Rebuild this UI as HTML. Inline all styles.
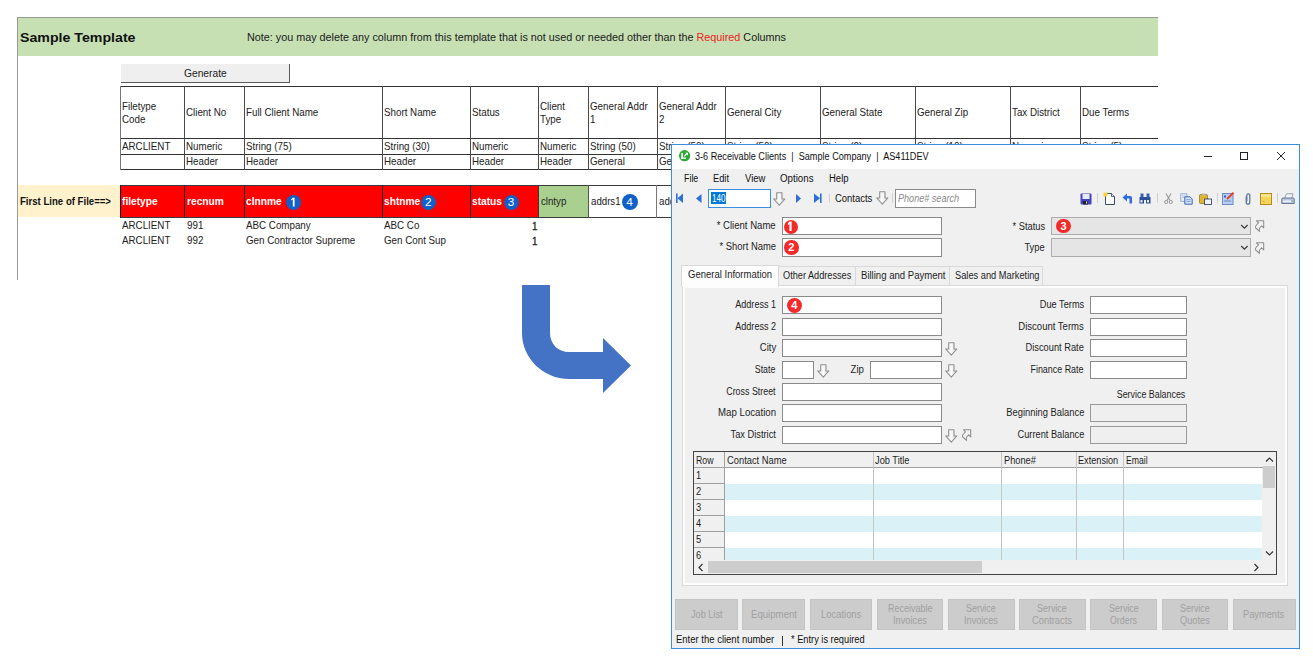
<!DOCTYPE html>
<html><head><meta charset="utf-8">
<style>
*{box-sizing:border-box;margin:0;padding:0}
html,body{width:1313px;height:664px;overflow:hidden;background:#fff}
body{position:relative;font-family:"Liberation Sans",sans-serif;color:#000}
.a{position:absolute}
.t{position:absolute;white-space:nowrap;line-height:1}
.wt{}
.xl{font-size:10.3px;color:#222;transform:scaleX(0.95);transform-origin:0 0}
.hl{position:absolute;height:1px;background:#333}
.vl{position:absolute;width:1px;background:#4a4a4a}
.badge{position:absolute;border-radius:50%;background:#1060c8;color:#fff;font-size:11px;text-align:center}
.rb{position:absolute;width:14px;height:14px;border-radius:50%;background:#f42a2a;color:#fff;font-size:11px;font-weight:bold;text-align:center;line-height:14px}
.inp{position:absolute;background:#fff;border:1px solid #8a8a8a}
.dis{position:absolute;background:#efefef;border:1px solid #9a9a9a}
</style></head><body>
<div class="a" style="left:17px;top:17px;width:1px;height:263px;background:#9a9a9a"></div>
<div class="a" style="left:17px;top:17px;width:1141px;height:1px;background:#9a9a9a"></div>
<div class="a" style="left:18px;top:18px;width:1140px;height:38px;background:#c6e0b4"></div>
<div class="t" style="top:30.85px;font-size:13.2px;color:#111;transform:scaleX(1.0745);font-weight:bold;left:20.30px;transform-origin:0 0;">Sample Template</div>
<div class="t" style="left:247px;top:32px;font-size:10.8px;color:#1a1a1a">Note: you may delete any column from this template that is not used or needed other than the <span style="color:#ee2020">Required</span> Columns</div>
<div class="a" style="left:121px;top:64px;width:169px;height:19px;background:#efefef;border-right:1px solid #5a5a5a;border-bottom:1px solid #5a5a5a"></div>
<div class="t" style="top:68.55px;font-size:10px;color:#222;transform:scaleX(1.0240);left:183.50px;transform-origin:0 0;">Generate</div>
<div class="hl" style="left:120px;top:86px;width:1038px"></div>
<div class="hl" style="left:120px;top:138px;width:1038px"></div>
<div class="hl" style="left:120px;top:154px;width:1038px"></div>
<div class="hl" style="left:120px;top:169px;width:1038px"></div>
<div class="vl" style="left:120px;top:86px;height:84px;background:#777"></div>
<div class="vl" style="left:184px;top:86px;height:84px"></div>
<div class="vl" style="left:244px;top:86px;height:84px"></div>
<div class="vl" style="left:382px;top:86px;height:84px"></div>
<div class="vl" style="left:470px;top:86px;height:84px"></div>
<div class="vl" style="left:538px;top:86px;height:84px"></div>
<div class="vl" style="left:588px;top:86px;height:84px"></div>
<div class="vl" style="left:657px;top:86px;height:84px"></div>
<div class="vl" style="left:725px;top:86px;height:84px"></div>
<div class="vl" style="left:820px;top:86px;height:84px"></div>
<div class="vl" style="left:915px;top:86px;height:84px"></div>
<div class="vl" style="left:1010px;top:86px;height:84px"></div>
<div class="vl" style="left:1080px;top:86px;height:84px"></div>
<div class="t xl" style="left:122px;top:101.3px;line-height:12.6px">Filetype<br>Code</div>
<div class="t xl" style="left:122px;top:142px">ARCLIENT</div>
<div class="t xl" style="left:186px;top:108px">Client No</div>
<div class="t xl" style="left:186px;top:142px">Numeric</div>
<div class="t xl" style="left:186px;top:157px">Header</div>
<div class="t xl" style="left:246px;top:108px">Full Client Name</div>
<div class="t xl" style="left:246px;top:142px">String (75)</div>
<div class="t xl" style="left:246px;top:157px">Header</div>
<div class="t xl" style="left:384px;top:108px">Short Name</div>
<div class="t xl" style="left:384px;top:142px">String (30)</div>
<div class="t xl" style="left:384px;top:157px">Header</div>
<div class="t xl" style="left:472px;top:108px">Status</div>
<div class="t xl" style="left:472px;top:142px">Numeric</div>
<div class="t xl" style="left:472px;top:157px">Header</div>
<div class="t xl" style="left:540px;top:101.3px;line-height:12.6px">Client<br>Type</div>
<div class="t xl" style="left:540px;top:142px">Numeric</div>
<div class="t xl" style="left:540px;top:157px">Header</div>
<div class="t xl" style="left:590px;top:101.3px;line-height:12.6px">General Addr<br>1</div>
<div class="t xl" style="left:590px;top:142px">String (50)</div>
<div class="t xl" style="left:590px;top:157px">General</div>
<div class="t xl" style="left:659px;top:101.3px;line-height:12.6px">General Addr<br>2</div>
<div class="t xl" style="left:659px;top:142px">String (50)</div>
<div class="t xl" style="left:659px;top:157px">General</div>
<div class="t xl" style="left:727px;top:108px">General City</div>
<div class="t xl" style="left:727px;top:142px">String (50)</div>
<div class="t xl" style="left:727px;top:157px">General</div>
<div class="t xl" style="left:822px;top:108px">General State</div>
<div class="t xl" style="left:822px;top:142px">String (2)</div>
<div class="t xl" style="left:822px;top:157px">General</div>
<div class="t xl" style="left:917px;top:108px">General Zip</div>
<div class="t xl" style="left:917px;top:142px">String (10)</div>
<div class="t xl" style="left:917px;top:157px">General</div>
<div class="t xl" style="left:1012px;top:108px">Tax District</div>
<div class="t xl" style="left:1012px;top:142px">Numeric</div>
<div class="t xl" style="left:1012px;top:157px">General</div>
<div class="t xl" style="left:1082px;top:108px">Due Terms</div>
<div class="t xl" style="left:1082px;top:142px">String (5)</div>
<div class="t xl" style="left:1082px;top:157px">General</div>
<div class="a" style="left:18px;top:185px;width:102px;height:32px;background:#fff2cc"></div>
<div class="t" style="top:197.30px;font-size:10.3px;color:#111;transform:scaleX(0.9324);font-weight:bold;left:19.90px;transform-origin:0 0;">First Line of File==&gt;</div>
<div class="a" style="left:120px;top:185px;width:419px;height:33px;background:#ff0000"></div>
<div class="a" style="left:539px;top:185px;width:49px;height:33px;background:#a9d08e"></div>
<div class="hl" style="left:120px;top:185px;width:551px;background:#3a3a3a"></div>
<div class="hl" style="left:120px;top:217px;width:551px;background:#3a3a3a"></div>
<div class="vl" style="left:120px;top:185px;height:33px;background:#1a1a1a"></div>
<div class="vl" style="left:184px;top:185px;height:33px;background:#1a1a1a"></div>
<div class="vl" style="left:244px;top:185px;height:33px;background:#1a1a1a"></div>
<div class="vl" style="left:382px;top:185px;height:33px;background:#1a1a1a"></div>
<div class="vl" style="left:470px;top:185px;height:33px;background:#1a1a1a"></div>
<div class="vl" style="left:538px;top:185px;height:33px;background:#3a3a3a"></div>
<div class="vl" style="left:588px;top:185px;height:33px;background:#555"></div>
<div class="vl" style="left:656px;top:185px;height:33px;background:#777"></div>
<div class="t" style="left:122px;top:197px;font-size:10.2px;font-weight:bold;color:#fff">filetype</div>
<div class="t" style="left:187px;top:197px;font-size:10.2px;font-weight:bold;color:#fff">recnum</div>
<div class="t" style="left:246px;top:197px;font-size:10.2px;font-weight:bold;color:#fff">clnnme</div>
<div class="t" style="left:384px;top:197px;font-size:10.2px;font-weight:bold;color:#fff">shtnme</div>
<div class="t" style="left:472px;top:197px;font-size:10.2px;font-weight:bold;color:#fff">status</div>
<div class="t xl" style="left:541px;top:197px;font-size:10.2px;color:#222">clntyp</div>
<div class="t xl" style="left:591px;top:197px;font-size:10.2px;color:#222">addrs1</div>
<div class="t xl" style="left:659px;top:197px;font-size:10.2px;color:#222">addrs2</div>
<svg class="a" style="left:285.5px;top:195.3px" width="15" height="15" viewBox="0 0 15 15"><circle cx="7.5" cy="7.5" r="7.5" fill="#1060c8"/><path d="M6.8 2.7 H8.6 V11.6 H6.8 V4.5 L5.2 5.5 V4.3 Z" fill="#fff"/></svg>
<div class="badge" style="left:420.8px;top:194.8px;width:15px;height:15px;line-height:15px;font-size:11.8px">2</div>
<div class="badge" style="left:503.5px;top:194.8px;width:15px;height:15px;line-height:15px;font-size:11.8px">3</div>
<div class="badge" style="left:621.6px;top:193.6px;width:16px;height:16px;line-height:16px;font-size:11.8px">4</div>
<div class="t xl" style="left:122px;top:221px">ARCLIENT</div>
<div class="t xl" style="left:187px;top:221px">991</div>
<div class="t xl" style="left:246px;top:221px">ABC Company</div>
<div class="t xl" style="left:384px;top:221px">ABC Co</div>
<div class="t xl" style="left:531.5px;top:221.5px;-webkit-text-stroke:0.3px #222">1</div>
<div class="t xl" style="left:122px;top:236px">ARCLIENT</div>
<div class="t xl" style="left:187px;top:236px">992</div>
<div class="t xl" style="left:246px;top:236px">Gen Contractor Supreme</div>
<div class="t xl" style="left:384px;top:236px">Gen Cont Sup</div>
<div class="t xl" style="left:531.5px;top:236.5px;-webkit-text-stroke:0.3px #222">1</div>
<svg class="a" style="left:0;top:0" width="1313" height="664"><path d="M522 285 L550 285 L550 333 C550 344 558 352 569 352 L603 352 L603 338 L631 365.5 L603 393 L603 379 L569 379 C543 379 522 358 522 333 Z" fill="#4472c4"/></svg>
<div class="a" style="left:671px;top:144px;width:629px;height:505px;border:1px solid #3b8ee0;background:#f0f0f0"></div>
<div class="a" style="left:672px;top:145px;width:627px;height:24px;background:#fff"></div>
<svg class="a" style="left:678px;top:149px" width="13" height="13" viewBox="0 0 13 13"><circle cx="6.6" cy="6.7" r="5.6" fill="#2ea836"/><rect x="3.3" y="3.9" width="1.7" height="5.9" fill="#fff"/><rect x="3.3" y="8.5" width="4.7" height="1.3" fill="#fff"/><path d="M6.2 7.3 L9.1 4.4" stroke="#fff" stroke-width="1.2"/><path d="M7.2 3.7 H10 V6.5 Z" fill="#fff"/></svg>
<div class="t wt" style="top:151.56px;font-size:10px;color:#111;transform:scaleX(0.9116);left:695.00px;transform-origin:0 0;">3-6 Receivable Clients&nbsp; |&nbsp; Sample Company&nbsp; |&nbsp; AS411DEV</div>
<div class="a" style="left:1204px;top:156px;width:8px;height:1px;background:#222"></div>
<div class="a" style="left:1240px;top:152px;width:8px;height:8px;border:1px solid #222"></div>
<svg class="a" style="left:1276px;top:151px" width="10" height="10"><path d="M1 1 L9 9 M9 1 L1 9" stroke="#222" stroke-width="1"/></svg>
<div class="t wt" style="top:173.56px;font-size:10px;color:#111;transform:scaleX(0.8882);left:683.70px;transform-origin:0 0;">File</div>
<div class="t wt" style="top:173.56px;font-size:10px;color:#111;transform:scaleX(0.9275);left:713.20px;transform-origin:0 0;">Edit</div>
<div class="t wt" style="top:173.56px;font-size:10px;color:#111;transform:scaleX(0.9442);left:744.50px;transform-origin:0 0;">View</div>
<div class="t wt" style="top:173.56px;font-size:10px;color:#111;transform:scaleX(0.9724);left:779.70px;transform-origin:0 0;">Options</div>
<div class="t wt" style="top:173.56px;font-size:10px;color:#111;transform:scaleX(0.9489);left:828.70px;transform-origin:0 0;">Help</div>
<svg class="a" style="left:672px;top:190px" width="160" height="18"><rect x="4" y="3.5" width="1.6" height="9.5" fill="#2a6fdc"/><path d="M11 3.5 L5.5 8.2 L11 13 Z" fill="#2a6fdc"/><path d="M29.5 4 L24 8.5 L29.5 13 Z" fill="#2a6fdc"/><path d="M124 4 L129 8.5 L124 13 Z" fill="#2a6fdc"/><path d="M142 3.5 L148 8.2 L142 13 Z" fill="#2a6fdc"/><rect x="148" y="3.5" width="1.6" height="9.5" fill="#2a6fdc"/><rect x="157" y="3.5" width="1" height="9.5" fill="#d0d0d0"/></svg>
<div class="a" style="left:708px;top:189px;width:63px;height:19px;background:#fff;border:1px solid #3c8fe0"></div>
<div class="a" style="left:711px;top:192px;width:14.5px;height:12px;background:#0078d7"></div>
<div class="t wt" style="top:193.56px;font-size:10px;color:#fff;transform:scaleX(0.8084);left:711.50px;transform-origin:0 0;">140</div>
<svg class="a" style="left:773px;top:191.9px" width="13" height="14" viewBox="0 0 13 14"><defs><linearGradient id="dg1" x1="0" y1="0" x2="1" y2="0"><stop offset="0" stop-color="#e6e6e6"/><stop offset="0.5" stop-color="#fbfbfb"/><stop offset="1" stop-color="#d6d6d6"/></linearGradient></defs><path d="M3.7 0.7 H9 V7 H11.9 L6.3 13.1 L0.7 7 H3.7 Z" fill="url(#dg1)" stroke="#8e8e8e" stroke-width="1.05" stroke-linejoin="round"/></svg>
<div class="t wt" style="top:193.56px;font-size:10px;color:#111;transform:scaleX(0.9430);left:835.20px;transform-origin:0 0;">Contacts</div>
<svg class="a" style="left:875.6px;top:191.4px" width="13" height="14" viewBox="0 0 13 14"><defs><linearGradient id="dg2" x1="0" y1="0" x2="1" y2="0"><stop offset="0" stop-color="#e6e6e6"/><stop offset="0.5" stop-color="#fbfbfb"/><stop offset="1" stop-color="#d6d6d6"/></linearGradient></defs><path d="M3.7 0.7 H9 V7 H11.9 L6.3 13.1 L0.7 7 H3.7 Z" fill="url(#dg2)" stroke="#8e8e8e" stroke-width="1.05" stroke-linejoin="round"/></svg>
<div class="a" style="left:892px;top:193px;width:1px;height:10px;background:#d0d0d0"></div>
<div class="a" style="left:895px;top:189px;width:81px;height:19px;background:#fff;border:1px solid #8a8a8a"></div>
<div class="t" style="top:193.56px;font-size:10px;color:#8a8a8a;transform:scaleX(0.9071);font-style:italic;left:898.00px;transform-origin:0 0;">Phone# search</div>
<svg class="a" style="left:1080px;top:193px" width="12" height="12" viewBox="0 0 12 12"><rect x="0.5" y="0.5" width="11" height="11" rx="1" fill="#4343c0"/><rect x="2.5" y="1" width="7" height="5" fill="#e8ecff"/><rect x="3" y="8" width="5" height="3.5" fill="#222"/><rect x="6" y="8.5" width="1.2" height="2" fill="#ddd"/></svg>
<div class="a" style="left:1097px;top:193px;width:1px;height:10px;background:#d0d0d0"></div>
<svg class="a" style="left:1103px;top:192px" width="13" height="13" viewBox="0 0 13 13"><path d="M2.5 1.5 H8.5 L11.5 4.5 V12.5 H2.5 Z" fill="#fdfdfd" stroke="#3c4a66" stroke-width="1"/><path d="M8.5 1.5 V4.5 H11.5" fill="#dde" stroke="#3c4a66" stroke-width="0.8"/><rect x="0.5" y="0.5" width="4" height="4" fill="#f6d23c"/></svg>
<svg class="a" style="left:1122px;top:193px" width="11" height="11" viewBox="0 0 11 11"><path d="M0.5 4.5 L5 0.5 V3 H8.5 Q10 3 10 4.5 V10.5 H7.5 V5.5 H5 V8.5 Z" fill="#2f6ee0"/></svg>
<svg class="a" style="left:1139px;top:193px" width="12" height="11" viewBox="0 0 12 11"><rect x="0.5" y="4" width="4.5" height="6.5" fill="#2b4f9a"/><rect x="7" y="4" width="4.5" height="6.5" fill="#2b4f9a"/><rect x="1.5" y="0.5" width="3" height="4" fill="#3b62b0"/><rect x="7.5" y="0.5" width="3" height="4" fill="#3b62b0"/><rect x="4.5" y="4" width="3" height="3" fill="#2b4f9a"/><rect x="1.5" y="7" width="2" height="2.5" fill="#e8eefc"/><rect x="8" y="7" width="2" height="2.5" fill="#e8eefc"/></svg>
<div class="a" style="left:1157px;top:193px;width:1px;height:10px;background:#d0d0d0"></div>
<svg class="a" style="left:1164px;top:193px" width="9" height="11" viewBox="0 0 9 11"><path d="M2 0.5 L6 7.5 M7 0.5 L3 7.5" stroke="#9a9a9a" stroke-width="1.1"/><circle cx="2.2" cy="9" r="1.6" fill="none" stroke="#9a9a9a" stroke-width="1"/><circle cx="6.8" cy="9" r="1.6" fill="none" stroke="#9a9a9a" stroke-width="1"/></svg>
<svg class="a" style="left:1180px;top:192.5px" width="13" height="12" viewBox="0 0 13 12"><rect x="0.8" y="0.8" width="6" height="7.5" fill="#eef2f8" stroke="#8da3c8" stroke-width="0.9"/><path d="M2 3 H5.5 M2 4.6 H5.5" stroke="#9fb3d6" stroke-width="0.7"/><path d="M4.8 3.8 H10 L12.2 6 V11.2 H4.8 Z" fill="#d4e2f6" stroke="#3e66b4" stroke-width="1"/><path d="M6.3 6.6 H10.6 M6.3 8.4 H10.6" stroke="#6f90cc" stroke-width="0.8"/></svg>
<svg class="a" style="left:1199px;top:193px" width="13" height="12" viewBox="0 0 13 12"><rect x="0.5" y="1.5" width="8" height="9" rx="1" fill="#e2b531" stroke="#9a7a1c" stroke-width="0.8"/><rect x="3" y="0.5" width="3.5" height="2" fill="#b8b8b8"/><rect x="5.5" y="6" width="7" height="5.5" fill="#eef2fa" stroke="#3a4a6a" stroke-width="0.9"/></svg>
<div class="a" style="left:1217px;top:193px;width:1px;height:10px;background:#d0d0d0"></div>
<svg class="a" style="left:1222px;top:192px" width="13" height="13" viewBox="0 0 13 13"><rect x="0.5" y="1.5" width="10.5" height="11" fill="#b8cdf0" stroke="#6a8cc8" stroke-width="1"/><rect x="2" y="3.5" width="2" height="2" fill="#3b5bd0"/><path d="M2 9 H9" stroke="#6a8cc8" stroke-width="1"/><path d="M5 7 L11.5 0.8" stroke="#e8412c" stroke-width="2"/></svg>
<svg class="a" style="left:1243.5px;top:192.5px" width="8" height="12" viewBox="0 0 8 12"><path d="M2.2 3.5 V9 Q2.2 11.2 4 11.2 Q5.8 11.2 5.8 9 V2.6 Q5.8 0.8 4.2 0.8 Q2.8 0.8 2.8 2.6 V8.3" fill="none" stroke="#61789c" stroke-width="1.3"/></svg>
<svg class="a" style="left:1260px;top:193px" width="12" height="12" viewBox="0 0 12 12"><rect x="0.5" y="0.5" width="11" height="11" fill="#f2d55a" stroke="#b88a18" stroke-width="1"/><rect x="1" y="1" width="10" height="3" fill="#f8e68a"/><path d="M3 8 L4.5 9" stroke="#b88a18" stroke-width="0.8"/></svg>
<div class="a" style="left:1277px;top:193px;width:1px;height:10px;background:#d0d0d0"></div>
<svg class="a" style="left:1281px;top:192.5px" width="14" height="12" viewBox="0 0 14 12"><path d="M3.5 5.5 L5.5 0.8 H12 L10.5 5.5 Z" fill="#f4f6fa" stroke="#7a8aa8" stroke-width="0.8"/><path d="M0.8 6 Q0.8 5 2 5 H12 Q13.2 5 13.2 6 V10.5 H0.8 Z" fill="#b9c6dc" stroke="#5b6d90" stroke-width="0.9"/><rect x="2" y="7.5" width="8" height="1.6" fill="#eef2f8"/><rect x="10.8" y="7.6" width="1.2" height="1" fill="#58a858"/></svg>
<div class="t wt" style="top:220.56px;font-size:10px;color:#1e1e1e;transform:scaleX(0.9562);right:537.21px;transform-origin:100% 0;">* Client Name</div>
<div class="t wt" style="top:241.56px;font-size:10px;color:#1e1e1e;transform:scaleX(0.9425);right:537.22px;transform-origin:100% 0;">* Short Name</div>
<div class="inp" style="left:782px;top:217px;width:160px;height:18px"></div>
<div class="inp" style="left:782px;top:238px;width:160px;height:19px"></div>
<svg class="a" style="left:784.4px;top:219.9px" width="14" height="14" viewBox="0 0 14 14"><circle cx="7" cy="7" r="7" fill="#f42a2a"/><path d="M5.4 1.6 H7.6 V11.1 H5.4 V4.3 L3.9 5.1 V3.3 Z" fill="#fff"/></svg>
<div class="rb" style="left:784.15px;top:240.25px;width:14.5px;height:14.5px;line-height:14.5px">2</div>
<div class="t wt" style="top:221.56px;font-size:10px;color:#1e1e1e;transform:scaleX(0.9286);right:267.98px;transform-origin:100% 0;">* Status</div>
<div class="t wt" style="top:242.56px;font-size:10px;color:#1e1e1e;transform:scaleX(0.9355);right:268.02px;transform-origin:100% 0;">Type</div>
<div class="a" style="left:1051px;top:217px;width:200px;height:18px;background:#e5e5e5;border:1px solid #adadad"></div>
<svg class="a" style="left:1239.5px;top:223.5px" width="9" height="6"><path d="M1.2 1 L4.4 4.2 L7.6 1" fill="none" stroke="#3a3a3a" stroke-width="1.25"/></svg>
<div class="a" style="left:1051px;top:238px;width:200px;height:19px;background:#e5e5e5;border:1px solid #adadad"></div>
<svg class="a" style="left:1239.5px;top:244.5px" width="9" height="6"><path d="M1.2 1 L4.4 4.2 L7.6 1" fill="none" stroke="#3a3a3a" stroke-width="1.25"/></svg>
<div class="rb" style="left:1056.25px;top:218.85px;width:14.5px;height:14.5px;line-height:14.5px">3</div>
<svg class="a" style="left:1254.1px;top:219.1px" width="12" height="14" viewBox="0 0 12 14"><path d="M2.5 1.8 L9.7 1.8 L9.7 8.9 L7.6 6.9 L5.6 9 Q4.9 10.2 5.6 12.4 L1.7 9 Q0.9 7.6 2.4 6 L4.5 3.9 Z" fill="#f2f2f2" stroke="#8e8e8e" stroke-width="1.05" stroke-linejoin="round"/></svg>
<svg class="a" style="left:1254.1px;top:240.6px" width="12" height="14" viewBox="0 0 12 14"><path d="M2.5 1.8 L9.7 1.8 L9.7 8.9 L7.6 6.9 L5.6 9 Q4.9 10.2 5.6 12.4 L1.7 9 Q0.9 7.6 2.4 6 L4.5 3.9 Z" fill="#f2f2f2" stroke="#8e8e8e" stroke-width="1.05" stroke-linejoin="round"/></svg>
<div class="a" style="left:778px;top:266px;width:78px;height:19px;background:#f0f0f0;border:1px solid #d9d9d9;border-bottom:none"></div>
<div class="a" style="left:855px;top:266px;width:95px;height:19px;background:#f0f0f0;border:1px solid #d9d9d9;border-bottom:none"></div>
<div class="a" style="left:949px;top:266px;width:94px;height:19px;background:#f0f0f0;border:1px solid #d9d9d9;border-bottom:none"></div>
<div class="a" style="left:682px;top:285px;width:606px;height:301px;background:#f0f0f0;border:1px solid #dadada"></div>
<div class="a" style="left:683px;top:286px;width:604px;height:299px;border:2px solid #fdfdfd"></div>
<div class="a" style="left:681px;top:265px;width:98px;height:22px;background:#fdfdfd;border:1px solid #d9d9d9;border-bottom:none"></div>
<div class="t wt" style="top:269.56px;font-size:10px;color:#1e1e1e;transform:scaleX(0.9514);left:688.20px;transform-origin:0 0;">General Information</div>
<div class="t wt" style="top:270.56px;font-size:10px;color:#1e1e1e;transform:scaleX(0.9168);left:782.60px;transform-origin:0 0;">Other Addresses</div>
<div class="t wt" style="top:270.56px;font-size:10px;color:#1e1e1e;transform:scaleX(0.9559);left:860.70px;transform-origin:0 0;">Billing and Payment</div>
<div class="t wt" style="top:270.56px;font-size:10px;color:#1e1e1e;transform:scaleX(0.9270);left:955.10px;transform-origin:0 0;">Sales and Marketing</div>
<div class="t wt" style="top:299.56px;font-size:10px;color:#1e1e1e;transform:scaleX(0.9057);right:537.32px;transform-origin:100% 0;">Address 1</div>
<div class="inp" style="left:782px;top:296px;width:160px;height:18px"></div>
<div class="t wt" style="top:321.56px;font-size:10px;color:#1e1e1e;transform:scaleX(0.9057);right:537.32px;transform-origin:100% 0;">Address 2</div>
<div class="inp" style="left:782px;top:318px;width:160px;height:18px"></div>
<div class="t wt" style="top:342.56px;font-size:10px;color:#1e1e1e;transform:scaleX(0.9593);right:537.28px;transform-origin:100% 0;">City</div>
<div class="inp" style="left:782px;top:339px;width:160px;height:18px"></div>
<svg class="a" style="left:944.5px;top:341.5px" width="13" height="14" viewBox="0 0 13 14"><defs><linearGradient id="dg3" x1="0" y1="0" x2="1" y2="0"><stop offset="0" stop-color="#e6e6e6"/><stop offset="0.5" stop-color="#fbfbfb"/><stop offset="1" stop-color="#d6d6d6"/></linearGradient></defs><path d="M3.7 0.7 H9 V7 H11.9 L6.3 13.1 L0.7 7 H3.7 Z" fill="url(#dg3)" stroke="#8e8e8e" stroke-width="1.05" stroke-linejoin="round"/></svg>
<div class="t wt" style="top:364.56px;font-size:10px;color:#1e1e1e;transform:scaleX(0.8822);right:537.30px;transform-origin:100% 0;">State</div>
<div class="inp" style="left:782px;top:361px;width:32px;height:18px"></div>
<svg class="a" style="left:816.5px;top:363.5px" width="13" height="14" viewBox="0 0 13 14"><defs><linearGradient id="dg4" x1="0" y1="0" x2="1" y2="0"><stop offset="0" stop-color="#e6e6e6"/><stop offset="0.5" stop-color="#fbfbfb"/><stop offset="1" stop-color="#d6d6d6"/></linearGradient></defs><path d="M3.7 0.7 H9 V7 H11.9 L6.3 13.1 L0.7 7 H3.7 Z" fill="url(#dg4)" stroke="#8e8e8e" stroke-width="1.05" stroke-linejoin="round"/></svg>
<div class="t wt" style="top:364.56px;font-size:10px;color:#1e1e1e;transform:scaleX(0.9640);right:449.31px;transform-origin:100% 0;">Zip</div>
<div class="inp" style="left:870px;top:361px;width:72px;height:18px"></div>
<svg class="a" style="left:944.5px;top:363.5px" width="13" height="14" viewBox="0 0 13 14"><defs><linearGradient id="dg5" x1="0" y1="0" x2="1" y2="0"><stop offset="0" stop-color="#e6e6e6"/><stop offset="0.5" stop-color="#fbfbfb"/><stop offset="1" stop-color="#d6d6d6"/></linearGradient></defs><path d="M3.7 0.7 H9 V7 H11.9 L6.3 13.1 L0.7 7 H3.7 Z" fill="url(#dg5)" stroke="#8e8e8e" stroke-width="1.05" stroke-linejoin="round"/></svg>
<div class="t wt" style="top:386.56px;font-size:10px;color:#1e1e1e;transform:scaleX(0.8875);right:537.28px;transform-origin:100% 0;">Cross Street</div>
<div class="inp" style="left:782px;top:383px;width:160px;height:18px"></div>
<div class="t wt" style="top:407.56px;font-size:10px;color:#1e1e1e;transform:scaleX(0.9659);right:537.31px;transform-origin:100% 0;">Map Location</div>
<div class="inp" style="left:782px;top:404px;width:160px;height:18px"></div>
<div class="t wt" style="top:429.56px;font-size:10px;color:#1e1e1e;transform:scaleX(0.9284);right:537.31px;transform-origin:100% 0;">Tax District</div>
<div class="inp" style="left:782px;top:426px;width:160px;height:18px"></div>
<svg class="a" style="left:944.5px;top:428.5px" width="13" height="14" viewBox="0 0 13 14"><defs><linearGradient id="dg6" x1="0" y1="0" x2="1" y2="0"><stop offset="0" stop-color="#e6e6e6"/><stop offset="0.5" stop-color="#fbfbfb"/><stop offset="1" stop-color="#d6d6d6"/></linearGradient></defs><path d="M3.7 0.7 H9 V7 H11.9 L6.3 13.1 L0.7 7 H3.7 Z" fill="url(#dg6)" stroke="#8e8e8e" stroke-width="1.05" stroke-linejoin="round"/></svg>
<svg class="a" style="left:961px;top:428px" width="12" height="14" viewBox="0 0 12 14"><path d="M2.5 1.8 L9.7 1.8 L9.7 8.9 L7.6 6.9 L5.6 9 Q4.9 10.2 5.6 12.4 L1.7 9 Q0.9 7.6 2.4 6 L4.5 3.9 Z" fill="#f2f2f2" stroke="#8e8e8e" stroke-width="1.05" stroke-linejoin="round"/></svg>
<div class="rb" style="left:786.70px;top:297.50px;width:15px;height:15px;line-height:15px">4</div>
<div class="t wt" style="top:299.56px;font-size:10px;color:#1e1e1e;transform:scaleX(0.9200);right:229.09px;transform-origin:100% 0;">Due Terms</div>
<div class="inp" style="left:1090px;top:296px;width:97px;height:18px"></div>
<div class="t wt" style="top:321.56px;font-size:10px;color:#1e1e1e;transform:scaleX(0.9513);right:229.12px;transform-origin:100% 0;">Discount Terms</div>
<div class="inp" style="left:1090px;top:318px;width:97px;height:18px"></div>
<div class="t wt" style="top:342.56px;font-size:10px;color:#1e1e1e;transform:scaleX(0.9268);right:229.09px;transform-origin:100% 0;">Discount Rate</div>
<div class="inp" style="left:1090px;top:339px;width:97px;height:18px"></div>
<div class="t wt" style="top:364.56px;font-size:10px;color:#1e1e1e;transform:scaleX(0.8908);right:229.12px;transform-origin:100% 0;">Finance Rate</div>
<div class="inp" style="left:1090px;top:361px;width:97px;height:18px"></div>
<div class="t wt" style="top:389.56px;font-size:10px;color:#1e1e1e;transform:scaleX(0.8867);right:127.59px;transform-origin:100% 0;">Service Balances</div>
<div class="t wt" style="top:407.56px;font-size:10px;color:#1e1e1e;transform:scaleX(0.9365);right:229.10px;transform-origin:100% 0;">Beginning Balance</div>
<div class="dis" style="left:1090px;top:404px;width:97px;height:18px"></div>
<div class="t wt" style="top:429.56px;font-size:10px;color:#1e1e1e;transform:scaleX(0.9232);right:229.09px;transform-origin:100% 0;">Current Balance</div>
<div class="dis" style="left:1090px;top:426px;width:97px;height:18px"></div>
<div class="a" style="left:693px;top:451px;width:584px;height:124px;background:#f0f0f0;border:1px solid #444"></div>
<div class="a" style="left:694px;top:452px;width:569px;height:16px;background:#f0f0f0;border-bottom:1px solid #a0a0a0"></div>
<div class="a" style="left:725px;top:468px;width:537px;height:16px;background:#ffffff"></div>
<div class="a" style="left:694px;top:467px;width:31px;height:1px;background:#a0a0a0"></div>
<div class="t wt" style="top:470.56px;font-size:10px;color:#1e1e1e;transform:scaleX(0.9300);left:696.30px;transform-origin:0 0;">1</div>
<div class="a" style="left:725px;top:484px;width:537px;height:16px;background:#daf1f8"></div>
<div class="a" style="left:694px;top:483px;width:31px;height:1px;background:#a0a0a0"></div>
<div class="t wt" style="top:486.56px;font-size:10px;color:#1e1e1e;transform:scaleX(0.9300);left:696.30px;transform-origin:0 0;">2</div>
<div class="a" style="left:725px;top:500px;width:537px;height:16px;background:#ffffff"></div>
<div class="a" style="left:694px;top:499px;width:31px;height:1px;background:#a0a0a0"></div>
<div class="t wt" style="top:502.56px;font-size:10px;color:#1e1e1e;transform:scaleX(0.9300);left:696.30px;transform-origin:0 0;">3</div>
<div class="a" style="left:725px;top:516px;width:537px;height:16px;background:#daf1f8"></div>
<div class="a" style="left:694px;top:515px;width:31px;height:1px;background:#a0a0a0"></div>
<div class="t wt" style="top:518.55px;font-size:10px;color:#1e1e1e;transform:scaleX(0.9300);left:696.30px;transform-origin:0 0;">4</div>
<div class="a" style="left:725px;top:532px;width:537px;height:16px;background:#ffffff"></div>
<div class="a" style="left:694px;top:531px;width:31px;height:1px;background:#a0a0a0"></div>
<div class="t wt" style="top:534.55px;font-size:10px;color:#1e1e1e;transform:scaleX(0.9300);left:696.30px;transform-origin:0 0;">5</div>
<div class="a" style="left:725px;top:548px;width:537px;height:12px;background:#daf1f8"></div>
<div class="a" style="left:694px;top:547px;width:31px;height:1px;background:#a0a0a0"></div>
<div class="t wt" style="top:550.55px;font-size:10px;color:#1e1e1e;transform:scaleX(0.9300);left:696.30px;transform-origin:0 0;">6</div>
<div class="a" style="left:873px;top:452px;width:1px;height:108px;background:#c4c4c4"></div>
<div class="a" style="left:1001px;top:452px;width:1px;height:108px;background:#c4c4c4"></div>
<div class="a" style="left:1076px;top:452px;width:1px;height:108px;background:#c4c4c4"></div>
<div class="a" style="left:1123px;top:452px;width:1px;height:108px;background:#c4c4c4"></div>
<div class="a" style="left:724px;top:452px;width:1px;height:108px;background:#a0a0a0"></div>
<div class="t wt" style="top:455.56px;font-size:10px;color:#1e1e1e;transform:scaleX(0.8778);left:696.10px;transform-origin:0 0;">Row</div>
<div class="t wt" style="top:455.56px;font-size:10px;color:#1e1e1e;transform:scaleX(0.9343);left:727.10px;transform-origin:0 0;">Contact Name</div>
<div class="t wt" style="top:455.56px;font-size:10px;color:#1e1e1e;transform:scaleX(0.9262);left:875.00px;transform-origin:0 0;">Job Title</div>
<div class="t wt" style="top:455.56px;font-size:10px;color:#1e1e1e;transform:scaleX(0.9246);left:1003.70px;transform-origin:0 0;">Phone#</div>
<div class="t wt" style="top:455.56px;font-size:10px;color:#1e1e1e;transform:scaleX(0.9157);left:1078.40px;transform-origin:0 0;">Extension</div>
<div class="t wt" style="top:455.56px;font-size:10px;color:#1e1e1e;transform:scaleX(0.8680);left:1125.90px;transform-origin:0 0;">Email</div>
<div class="a" style="left:708px;top:561px;width:274px;height:12px;background:#cdcdcd"></div>
<svg class="a" style="left:697px;top:563px" width="8" height="9"><path d="M5.5 1 L2 4.5 L5.5 8" fill="none" stroke="#333" stroke-width="1.2"/></svg>
<svg class="a" style="left:1252px;top:563px" width="8" height="9"><path d="M2.5 1 L6 4.5 L2.5 8" fill="none" stroke="#333" stroke-width="1.2"/></svg>
<div class="a" style="left:1263px;top:466px;width:12px;height:22px;background:#cdcdcd"></div>
<svg class="a" style="left:1265px;top:456px" width="9" height="8"><path d="M1 5.5 L4.5 2 L8 5.5" fill="none" stroke="#333" stroke-width="1.2"/></svg>
<svg class="a" style="left:1265px;top:549px" width="9" height="8"><path d="M1 2.5 L4.5 6 L8 2.5" fill="none" stroke="#333" stroke-width="1.2"/></svg>
<div class="a" style="left:675px;top:599px;width:62.5px;height:31px;background:#cccccc;border:1px solid #c4c4c4"></div>
<div class="t wt" style="top:609.55px;font-size:10px;color:#a0a0a0;transform:scaleX(0.9144);left:690.50px;transform-origin:0 0;">Job List</div>
<div class="a" style="left:742px;top:599px;width:63px;height:31px;background:#cccccc;border:1px solid #c4c4c4"></div>
<div class="t wt" style="top:609.55px;font-size:10px;color:#a0a0a0;transform:scaleX(0.9623);left:750.50px;transform-origin:0 0;">Equipment</div>
<div class="a" style="left:809.5px;top:599px;width:62.5px;height:31px;background:#cccccc;border:1px solid #c4c4c4"></div>
<div class="t wt" style="top:609.55px;font-size:10px;color:#a0a0a0;transform:scaleX(0.9416);left:820.60px;transform-origin:0 0;">Locations</div>
<div class="a" style="left:877px;top:599px;width:66px;height:31px;background:#cccccc;border:1px solid #c4c4c4"></div>
<div class="t wt" style="top:603.55px;font-size:10px;color:#a0a0a0;transform:scaleX(0.8999);left:887.75px;transform-origin:0 0;">Receivable</div>
<div class="t wt" style="top:615.55px;font-size:10px;color:#a0a0a0;transform:scaleX(0.9264);left:893.00px;transform-origin:0 0;">Invoices</div>
<div class="a" style="left:948px;top:599px;width:66.5px;height:31px;background:#cccccc;border:1px solid #c4c4c4"></div>
<div class="t wt" style="top:603.55px;font-size:10px;color:#a0a0a0;transform:scaleX(0.8936);left:966.35px;transform-origin:0 0;">Service</div>
<div class="t wt" style="top:615.55px;font-size:10px;color:#a0a0a0;transform:scaleX(0.9264);left:964.25px;transform-origin:0 0;">Invoices</div>
<div class="a" style="left:1019px;top:599px;width:66.5px;height:31px;background:#cccccc;border:1px solid #c4c4c4"></div>
<div class="t wt" style="top:603.55px;font-size:10px;color:#a0a0a0;transform:scaleX(0.8936);left:1037.35px;transform-origin:0 0;">Service</div>
<div class="t wt" style="top:615.55px;font-size:10px;color:#a0a0a0;transform:scaleX(0.9346);left:1032.25px;transform-origin:0 0;">Contracts</div>
<div class="a" style="left:1090px;top:599px;width:67px;height:31px;background:#cccccc;border:1px solid #c4c4c4"></div>
<div class="t wt" style="top:603.55px;font-size:10px;color:#a0a0a0;transform:scaleX(0.8936);left:1108.60px;transform-origin:0 0;">Service</div>
<div class="t wt" style="top:615.55px;font-size:10px;color:#a0a0a0;transform:scaleX(0.8838);left:1110.00px;transform-origin:0 0;">Orders</div>
<div class="a" style="left:1161.5px;top:599px;width:66.5px;height:31px;background:#cccccc;border:1px solid #c4c4c4"></div>
<div class="t wt" style="top:603.55px;font-size:10px;color:#a0a0a0;transform:scaleX(0.8936);left:1179.85px;transform-origin:0 0;">Service</div>
<div class="t wt" style="top:615.55px;font-size:10px;color:#a0a0a0;transform:scaleX(0.9240);left:1179.85px;transform-origin:0 0;">Quotes</div>
<div class="a" style="left:1232.5px;top:599px;width:63.0px;height:31px;background:#cccccc;border:1px solid #c4c4c4"></div>
<div class="t wt" style="top:609.55px;font-size:10px;color:#a0a0a0;transform:scaleX(0.9269);left:1243.40px;transform-origin:0 0;">Payments</div>
<div class="t wt" style="top:634.55px;font-size:10px;color:#111;transform:scaleX(0.9487);left:675.70px;transform-origin:0 0;">Enter the client number</div>
<div class="a" style="left:782px;top:636px;width:1px;height:9.5px;background:#333"></div>
<div class="t wt" style="top:634.55px;font-size:10px;color:#111;transform:scaleX(0.9258);left:791.40px;transform-origin:0 0;">* Entry is required</div>
</body></html>
